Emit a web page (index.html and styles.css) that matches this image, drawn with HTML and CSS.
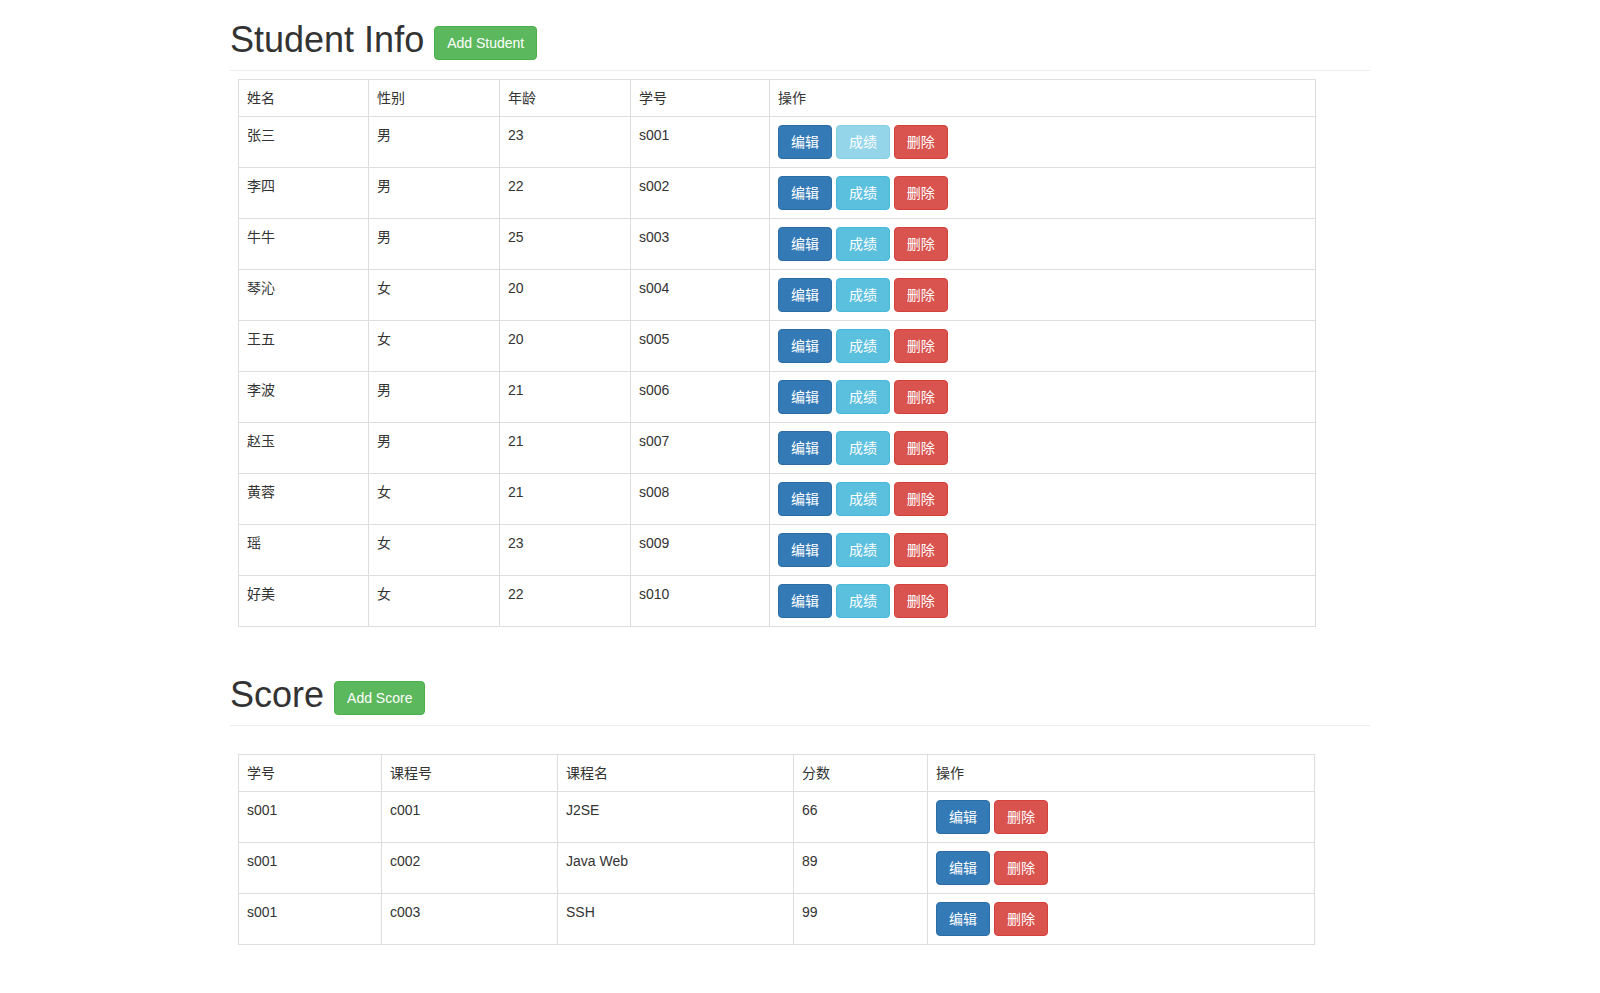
FILE: index.html
```html
<!DOCTYPE html>
<html lang="zh-CN">
<head>
<meta charset="utf-8">
<title>Student Info</title>
<link rel="stylesheet" href="styles.css">
</head>
<body>
<div class="container">
  <div class="page-header">
    <h1>Student Info <button class="btn btn-success">Add Student</button></h1>
  </div>
  <table class="grid grid-student">
    <colgroup>
      <col class="c-130"><col class="c-131"><col class="c-131"><col class="c-139"><col>
    </colgroup>
    <thead>
      <tr><th>姓名</th><th>性别</th><th>年龄</th><th>学号</th><th>操作</th></tr>
    </thead>
    <tbody>
      <tr><td>张三</td><td>男</td><td>23</td><td>s001</td><td><button class="btn btn-primary">编辑</button> <button class="btn btn-info disabled">成绩</button> <button class="btn btn-danger">删除</button></td></tr>
      <tr><td>李四</td><td>男</td><td>22</td><td>s002</td><td><button class="btn btn-primary">编辑</button> <button class="btn btn-info">成绩</button> <button class="btn btn-danger">删除</button></td></tr>
      <tr><td>牛牛</td><td>男</td><td>25</td><td>s003</td><td><button class="btn btn-primary">编辑</button> <button class="btn btn-info">成绩</button> <button class="btn btn-danger">删除</button></td></tr>
      <tr><td>琴沁</td><td>女</td><td>20</td><td>s004</td><td><button class="btn btn-primary">编辑</button> <button class="btn btn-info">成绩</button> <button class="btn btn-danger">删除</button></td></tr>
      <tr><td>王五</td><td>女</td><td>20</td><td>s005</td><td><button class="btn btn-primary">编辑</button> <button class="btn btn-info">成绩</button> <button class="btn btn-danger">删除</button></td></tr>
      <tr><td>李波</td><td>男</td><td>21</td><td>s006</td><td><button class="btn btn-primary">编辑</button> <button class="btn btn-info">成绩</button> <button class="btn btn-danger">删除</button></td></tr>
      <tr><td>赵玉</td><td>男</td><td>21</td><td>s007</td><td><button class="btn btn-primary">编辑</button> <button class="btn btn-info">成绩</button> <button class="btn btn-danger">删除</button></td></tr>
      <tr><td>黄蓉</td><td>女</td><td>21</td><td>s008</td><td><button class="btn btn-primary">编辑</button> <button class="btn btn-info">成绩</button> <button class="btn btn-danger">删除</button></td></tr>
      <tr><td>瑶</td><td>女</td><td>23</td><td>s009</td><td><button class="btn btn-primary">编辑</button> <button class="btn btn-info">成绩</button> <button class="btn btn-danger">删除</button></td></tr>
      <tr><td>好美</td><td>女</td><td>22</td><td>s010</td><td><button class="btn btn-primary">编辑</button> <button class="btn btn-info">成绩</button> <button class="btn btn-danger">删除</button></td></tr>
    </tbody>
  </table>

  <div class="page-header">
    <h1>Score <button class="btn btn-success">Add Score</button></h1>
  </div>
  <table class="grid grid-score">
    <colgroup>
      <col class="c-143"><col class="c-176"><col class="c-236"><col class="c-134"><col>
    </colgroup>
    <thead>
      <tr><th>学号</th><th>课程号</th><th>课程名</th><th>分数</th><th>操作</th></tr>
    </thead>
    <tbody>
      <tr><td>s001</td><td>c001</td><td>J2SE</td><td>66</td><td><button class="btn btn-primary">编辑</button> <button class="btn btn-danger">删除</button></td></tr>
      <tr><td>s001</td><td>c002</td><td>Java Web</td><td>89</td><td><button class="btn btn-primary">编辑</button> <button class="btn btn-danger">删除</button></td></tr>
      <tr><td>s001</td><td>c003</td><td>SSH</td><td>99</td><td><button class="btn btn-primary">编辑</button> <button class="btn btn-danger">删除</button></td></tr>
    </tbody>
  </table>
</div>
</body>
</html>
```

FILE: styles.css
```css
html, body {
  margin: 0;
  padding: 0;
  background: #fff;
}
body {
  font-family: "Liberation Sans", Arial, "Noto Sans CJK SC", sans-serif;
  font-size: 14px;
  line-height: 20px;
  color: #333;
}
.container {
  width: 1140px;
  margin: 0 auto;
}
.page-header {
  border-bottom: 1px solid #eee;
}
.page-header h1 {
  margin: 20px 0 10px;
  font-size: 36px;
  font-weight: 500;
  line-height: 1.1;
  color: #333;
}
.page-header h1 .btn {
  vertical-align: 4px;
}
.btn {
  display: inline-block;
  margin: 0;
  padding: 6px 12px;
  font-family: "Liberation Sans", Arial, "Noto Sans CJK SC", sans-serif;
  font-size: 14px;
  font-weight: 400;
  line-height: 20px;
  color: #fff;
  border: 1px solid transparent;
  border-radius: 4px;
  cursor: pointer;
  vertical-align: middle;
}
.btn-success { background: #5cb85c; border-color: #4cae4c; }
.btn-primary { background: #337ab7; border-color: #2e6da4; }
.btn-info { background: #5bc0de; border-color: #46b8da; }
.btn-danger { background: #d9534f; border-color: #d43f3a; }
.btn.disabled { opacity: .65; cursor: not-allowed; }

.grid {
  border-collapse: collapse;
  border-spacing: 0;
  table-layout: fixed;
  margin-left: 8px;
  border: 1px solid #ddd;
}
.grid th, .grid td {
  border: 1px solid #ddd;
  padding: 8px;
  text-align: left;
  vertical-align: top;
  font-weight: 400;
  line-height: 20px;
}
.grid-student {
  width: 1078px;
  margin-top: 8px;
  margin-bottom: 48px;
}
.grid-score {
  width: 1077px;
  margin-top: 28px;
  margin-bottom: 20px;
}
.c-130 { width: 130px; }
.c-131 { width: 131px; }
.c-139 { width: 139px; }
.c-143 { width: 143px; }
.c-176 { width: 176px; }
.c-236 { width: 236px; }
.c-134 { width: 134px; }
```
